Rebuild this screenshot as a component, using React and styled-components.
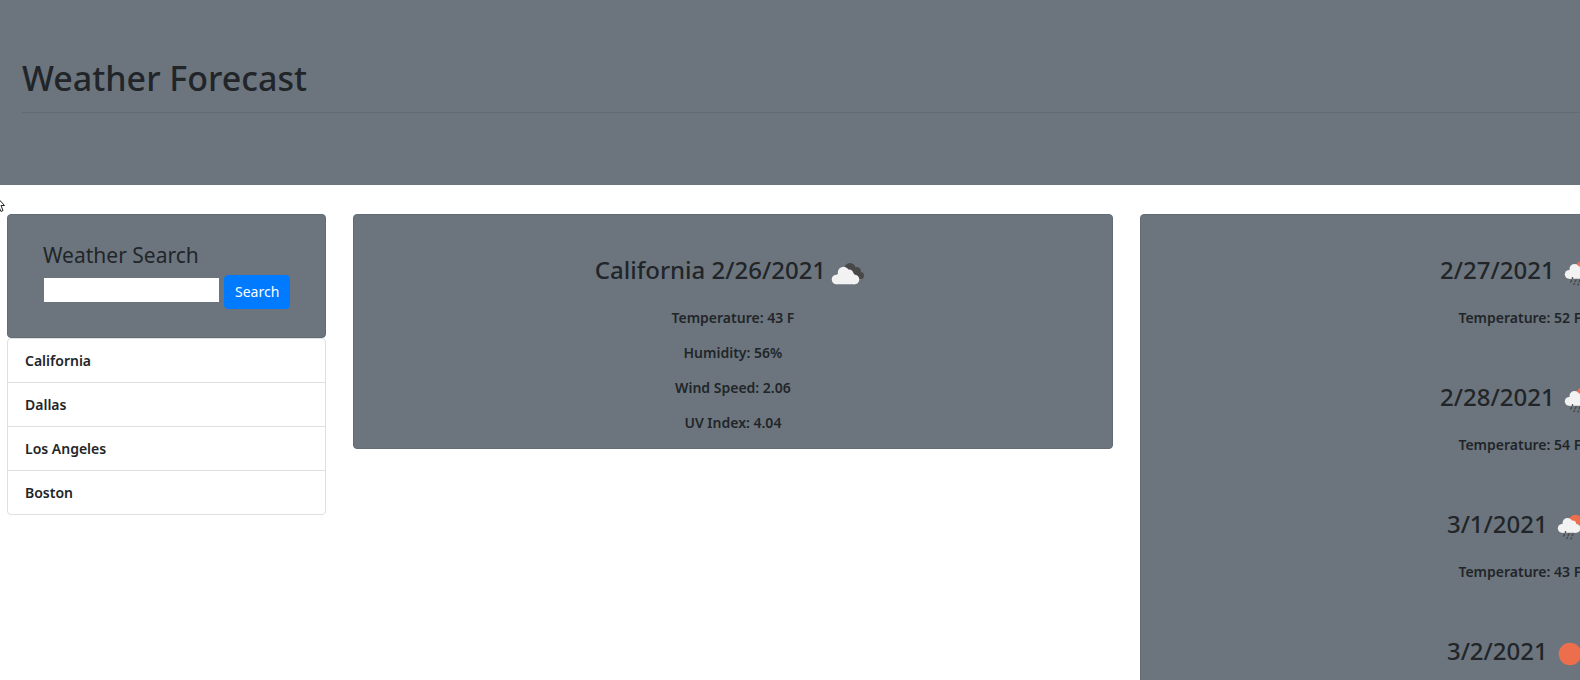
import React from "react";
import styled, { createGlobalStyle } from "styled-components";

const slate = "#6c757d";
const ink = "#212529";

const GlobalStyle = createGlobalStyle`
  *, *::before, *::after { box-sizing: border-box; }
  html { overflow: hidden; }
  body {
    margin: 0;
    overflow: hidden;
    background: #fff;
    color: ${ink};
    font-family: "Noto Sans", "Open Sans", sans-serif;
    font-size: 14px;
    line-height: 20px;
  }
`;

const Page = styled.div`
  position: relative;
  height: 100vh;
  overflow: hidden;
`;

const Canvas = styled.div`
  width: 121%;
`;

const Header = styled.header`
  background: ${slate};
  padding: 56px 22px 72px;
`;

const Title = styled.h1`
  margin: 0;
  padding-bottom: 12px;
  border-bottom: 1px solid #626a72;
  font-size: 34px;
  font-weight: 500;
  line-height: 44px;
`;

const Columns = styled.main`
  display: grid;
  grid-template-columns: minmax(0, 319fr) minmax(0, 760fr) minmax(0, 760fr);
  align-items: start;
  gap: 27px;
  padding: 29px 12px 29px 7px;
`;

const Card = styled.section`
  background: ${slate};
  border: 1px solid #636c74;
  border-radius: 4px;
`;

const SearchCard = styled(Card)`
  padding: 25px 35px 28px;
`;

const SearchLabel = styled.label`
  display: block;
  font-size: 21px;
  font-weight: 400;
  line-height: 30px;
`;

const SearchRow = styled.div`
  display: flex;
  align-items: flex-start;
  gap: 5px;
  padding-top: 5px;
`;

const SearchInput = styled.input`
  flex: 0 0 175px;
  min-width: 0;
  height: 24px;
  margin: 3px 0 0 1px;
  padding: 1px 4px;
  border: 0;
  background: #fff;
  font: inherit;
`;

const SearchButton = styled.button`
  height: 34px;
  padding: 0 10px;
  border: 1px solid #007bff;
  border-radius: 4px;
  background: #007bff;
  color: #fff;
  font: inherit;
  cursor: pointer;
`;

const CityList = styled.ul`
  margin: 0;
  padding: 0;
  list-style: none;
  border: 1px solid #dfdfdf;
  border-radius: 4px;
`;

const City = styled.li`
  padding: 12px 17px 11px;
  font-weight: 600;

  & + & { border-top: 1px solid #dfdfdf; }
`;

const WeatherCard = styled(Card)`
  padding: 35px 18px 15px;
`;

const Day = styled.article`
  text-align: center;

  & + & { margin-top: 49px; }
`;

const DayTitle = styled.h2`
  display: flex;
  justify-content: center;
  align-items: center;
  margin: 0 0 13px;
  font-size: 24px;
  font-weight: 500;
  line-height: 40px;
  white-space: nowrap;
`;

const DayLabel = styled.span`
  padding-bottom: 5px;
`;

const Reading = styled.p`
  margin: 0;
  font-weight: 600;

  & + & { margin-top: 15px; }
`;

const Icon = styled.svg`
  flex: none;
  width: 45px;
  height: 45px;
`;

const Pointer = styled.svg`
  position: absolute;
  left: 0;
  top: 198px;
  width: 6px;
  height: 15px;
`;

function BrokenClouds() {
  return (
    <Icon viewBox="0 0 45 45" role="img" aria-label="Broken clouds">
      <g fill="#484848">
        <circle cx="24" cy="18.500" r="5.500" />
        <circle cx="30.500" cy="21.500" r="4.500" />
        <circle cx="34.500" cy="25.500" r="3.500" />
        <path d="M22 20h10l5 8-4 1.300H24z" />
      </g>
      <g fill="#f2f2f2">
        <circle cx="10.500" cy="29.500" r="4.800" />
        <circle cx="17.500" cy="22.500" r="5.700" />
        <circle cx="23" cy="24" r="4.500" />
        <circle cx="28.500" cy="29.500" r="4.800" />
        <path d="M10.500 25L14 22h12l3 3v9.300H10.500z" />
      </g>
    </Icon>
  );
}

function RainSun() {
  return (
    <Icon viewBox="0 0 45 45" role="img" aria-label="Rain with sun">
      <circle cx="27.500" cy="18" r="7.200" fill="#ec6e4c" />
      <g fill="#f2f2f2">
        <circle cx="14.200" cy="24.300" r="4.400" />
        <circle cx="19.500" cy="19" r="5" />
        <circle cx="24.500" cy="20.200" r="3.800" />
        <circle cx="28" cy="24.300" r="4.400" />
        <path d="M14 20.500L17 18h9l2 2.500v8.200H14z" />
      </g>
      <g stroke="#484848" strokeWidth="1.500" strokeLinecap="round">
        <path d="M17.500 27.700v.5M16.500 30.500l-.8 1.500M21 30l-.8 1.500M25 30l-.8 1.500M19.500 33.500l-.5 1M23.500 34l-.5 1" />
      </g>
    </Icon>
  );
}

function Sun() {
  return (
    <Icon viewBox="0 0 45 45" role="img" aria-label="Clear sky">
      <circle cx="22" cy="23" r="11.300" fill="#ec6e4c" />
    </Icon>
  );
}

const cities = ["California", "Dallas", "Los Angeles", "Boston"];

const today = {
  label: "California 2/26/2021",
  icon: BrokenClouds,
  readings: ["Temperature: 43 F", "Humidity: 56%", "Wind Speed: 2.06", "UV Index: 4.04"],
};

const forecast = [
  { label: "2/27/2021", icon: RainSun, readings: ["Temperature: 52 F"] },
  { label: "2/28/2021", icon: RainSun, readings: ["Temperature: 54 F"] },
  { label: "3/1/2021", icon: RainSun, readings: ["Temperature: 43 F"] },
  { label: "3/2/2021", icon: Sun, readings: [] },
];

function DayWeather({ label, icon: Drawing, readings }) {
  return (
    <Day>
      <DayTitle>
        <DayLabel>{label}</DayLabel>
        <Drawing />
      </DayTitle>
      {readings.map((text) => (
        <Reading key={text}>{text}</Reading>
      ))}
    </Day>
  );
}

export default function App() {
  return (
    <Page>
      <GlobalStyle />
      <Canvas>
        <Header>
          <Title>Weather Forecast</Title>
        </Header>
        <Columns>
          <aside>
            <SearchCard as="form" onSubmit={(event) => event.preventDefault()}>
              <SearchLabel htmlFor="city">Weather Search</SearchLabel>
              <SearchRow>
                <SearchInput id="city" type="text" />
                <SearchButton type="submit">Search</SearchButton>
              </SearchRow>
            </SearchCard>
            <CityList>
              {cities.map((name) => (
                <City key={name}>{name}</City>
              ))}
            </CityList>
          </aside>
          <WeatherCard>
            <DayWeather {...today} />
          </WeatherCard>
          <WeatherCard>
            {forecast.map((day) => (
              <DayWeather key={day.label} {...day} />
            ))}
          </WeatherCard>
        </Columns>
      </Canvas>
      <Pointer viewBox="0 0 6 15" aria-hidden="true">
        <path d="M-6-4L4.500 7.500H1L3 12.500 1 13.500-1 9" fill="#fff" stroke="#222" />
      </Pointer>
    </Page>
  );
}
